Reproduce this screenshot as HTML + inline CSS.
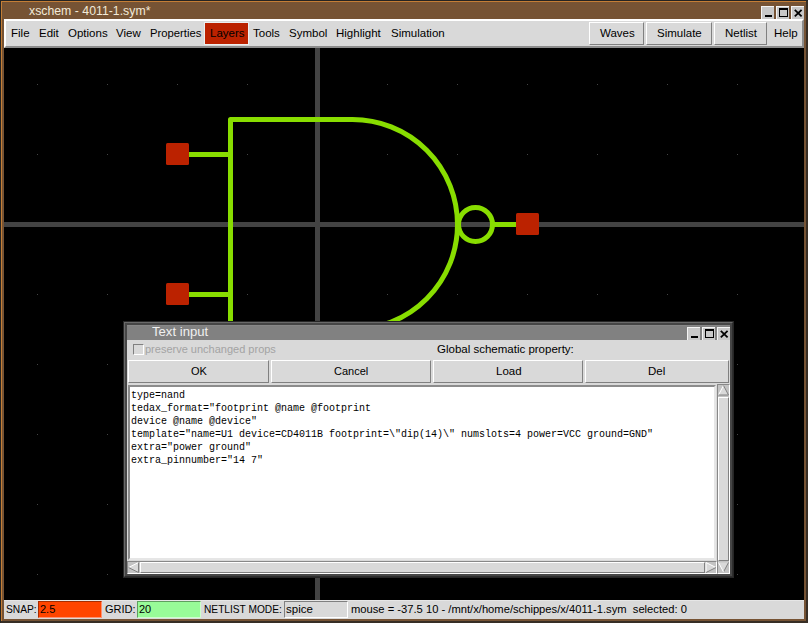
<!DOCTYPE html>
<html><head><meta charset="utf-8">
<style>
*{box-sizing:border-box;margin:0;padding:0}
html,body{width:808px;height:623px;overflow:hidden;background:#252423;font-family:"Liberation Sans",sans-serif}
.a{position:absolute}
.t{position:absolute;white-space:pre;line-height:1;transform-origin:0 0;color:#000}
.m{font-family:"Liberation Mono",monospace}
.btn{position:absolute;background:#d9d9d9;border-top:1px solid #fff;border-left:1px solid #fff;border-right:1px solid #808080;border-bottom:1px solid #808080}
.wb{position:absolute;width:13px;height:13px;background:#c8c8c8;border-top:1px solid #f4f4f4;border-left:1px solid #f4f4f4}
</style></head><body>
<!-- window frame -->
<div class="a" style="left:1px;top:1px;width:805px;height:621px;background:#c47e36"></div>
<div class="a" style="left:2px;top:2px;width:804px;height:619px;background:#3a3027"></div>
<div class="a" style="left:2px;top:2px;width:804px;height:619px;background:#765334;right:auto"></div>
<div class="a" style="left:806px;top:1px;width:2px;height:622px;background:#372e25"></div>
<div class="a" style="left:1px;top:621px;width:807px;height:2px;background:#372e25"></div>
<div class="t" style="left:29px;top:5px;font-size:12.3px;color:#f2ead8">xschem - 4011-1.sym*</div>
<!-- window buttons -->
<div class="wb" style="left:761px;top:6px"><div class="a" style="left:3px;top:8px;width:7px;height:2px;background:#000"></div></div>
<div class="wb" style="left:776px;top:6px"><div class="a" style="left:2px;top:1px;width:9px;height:9px;border:1.5px solid #000;border-top-width:2px"></div></div>
<div class="wb" style="left:791px;top:6px"><svg class="a" style="left:0;top:0" width="12" height="12" viewBox="0 0 12 12"><path d="M2.8 2.8L9.6 9.4M9.6 2.8L2.8 9.4" stroke="#000" stroke-width="1.8"/></svg></div>

<!-- menubar -->
<div class="a" style="left:4px;top:19px;width:800px;height:29px;background:#d9d9d9;border-top:2px solid #fff;border-left:2px solid #fff;border-right:2px solid #8c8c8c;border-bottom:2px solid #8c8c8c"></div>
<div class="a" style="left:204px;top:22px;width:45px;height:23px;background:#bb2200;border:1px solid #eceff0"></div>
<div class="t" style="left:11px;top:28px;font-size:11.5px">File</div>
<div class="t" style="left:39px;top:28px;font-size:11.5px">Edit</div>
<div class="t" style="left:68px;top:28px;font-size:11.5px">Options</div>
<div class="t" style="left:116px;top:28px;font-size:11.5px">View</div>
<div class="t" style="left:150px;top:28px;font-size:11.5px;transform:scaleX(0.98)">Properties</div>
<div class="t" style="left:210px;top:28px;font-size:11.5px">Layers</div>
<div class="t" style="left:253px;top:28px;font-size:11.5px">Tools</div>
<div class="t" style="left:289px;top:28px;font-size:11.5px">Symbol</div>
<div class="t" style="left:336px;top:28px;font-size:11.5px">Highlight</div>
<div class="t" style="left:391px;top:28px;font-size:11.5px">Simulation</div>
<div class="btn" style="left:589px;top:22px;width:55px;height:23px"></div>
<div class="btn" style="left:646px;top:22px;width:66px;height:23px"></div>
<div class="btn" style="left:714px;top:22px;width:53px;height:23px"></div>
<div class="t" style="left:600px;top:28px;font-size:11.5px">Waves</div>
<div class="t" style="left:657px;top:28px;font-size:11.5px">Simulate</div>
<div class="t" style="left:725px;top:28px;font-size:11.5px">Netlist</div>
<div class="t" style="left:774px;top:28px;font-size:11.5px">Help</div>

<!-- canvas -->
<svg class="a" style="left:4px;top:48px" width="800" height="552" viewBox="4 48 800 552">
<rect x="4" y="48" width="800" height="552" fill="#000"/>
<g fill="#444"><rect x="37" y="84" width="1" height="1"/><rect x="37" y="154" width="1" height="1"/><rect x="37" y="224" width="1" height="1"/><rect x="37" y="294" width="1" height="1"/><rect x="37" y="364" width="1" height="1"/><rect x="37" y="434" width="1" height="1"/><rect x="37" y="504" width="1" height="1"/><rect x="37" y="574" width="1" height="1"/><rect x="107" y="84" width="1" height="1"/><rect x="107" y="154" width="1" height="1"/><rect x="107" y="224" width="1" height="1"/><rect x="107" y="294" width="1" height="1"/><rect x="107" y="364" width="1" height="1"/><rect x="107" y="434" width="1" height="1"/><rect x="107" y="504" width="1" height="1"/><rect x="107" y="574" width="1" height="1"/><rect x="177" y="84" width="1" height="1"/><rect x="177" y="154" width="1" height="1"/><rect x="177" y="224" width="1" height="1"/><rect x="177" y="294" width="1" height="1"/><rect x="177" y="364" width="1" height="1"/><rect x="177" y="434" width="1" height="1"/><rect x="177" y="504" width="1" height="1"/><rect x="177" y="574" width="1" height="1"/><rect x="247" y="84" width="1" height="1"/><rect x="247" y="154" width="1" height="1"/><rect x="247" y="224" width="1" height="1"/><rect x="247" y="294" width="1" height="1"/><rect x="247" y="364" width="1" height="1"/><rect x="247" y="434" width="1" height="1"/><rect x="247" y="504" width="1" height="1"/><rect x="247" y="574" width="1" height="1"/><rect x="317" y="84" width="1" height="1"/><rect x="317" y="154" width="1" height="1"/><rect x="317" y="224" width="1" height="1"/><rect x="317" y="294" width="1" height="1"/><rect x="317" y="364" width="1" height="1"/><rect x="317" y="434" width="1" height="1"/><rect x="317" y="504" width="1" height="1"/><rect x="317" y="574" width="1" height="1"/><rect x="387" y="84" width="1" height="1"/><rect x="387" y="154" width="1" height="1"/><rect x="387" y="224" width="1" height="1"/><rect x="387" y="294" width="1" height="1"/><rect x="387" y="364" width="1" height="1"/><rect x="387" y="434" width="1" height="1"/><rect x="387" y="504" width="1" height="1"/><rect x="387" y="574" width="1" height="1"/><rect x="457" y="84" width="1" height="1"/><rect x="457" y="154" width="1" height="1"/><rect x="457" y="224" width="1" height="1"/><rect x="457" y="294" width="1" height="1"/><rect x="457" y="364" width="1" height="1"/><rect x="457" y="434" width="1" height="1"/><rect x="457" y="504" width="1" height="1"/><rect x="457" y="574" width="1" height="1"/><rect x="527" y="84" width="1" height="1"/><rect x="527" y="154" width="1" height="1"/><rect x="527" y="224" width="1" height="1"/><rect x="527" y="294" width="1" height="1"/><rect x="527" y="364" width="1" height="1"/><rect x="527" y="434" width="1" height="1"/><rect x="527" y="504" width="1" height="1"/><rect x="527" y="574" width="1" height="1"/><rect x="597" y="84" width="1" height="1"/><rect x="597" y="154" width="1" height="1"/><rect x="597" y="224" width="1" height="1"/><rect x="597" y="294" width="1" height="1"/><rect x="597" y="364" width="1" height="1"/><rect x="597" y="434" width="1" height="1"/><rect x="597" y="504" width="1" height="1"/><rect x="597" y="574" width="1" height="1"/><rect x="667" y="84" width="1" height="1"/><rect x="667" y="154" width="1" height="1"/><rect x="667" y="224" width="1" height="1"/><rect x="667" y="294" width="1" height="1"/><rect x="667" y="364" width="1" height="1"/><rect x="667" y="434" width="1" height="1"/><rect x="667" y="504" width="1" height="1"/><rect x="667" y="574" width="1" height="1"/><rect x="737" y="84" width="1" height="1"/><rect x="737" y="154" width="1" height="1"/><rect x="737" y="224" width="1" height="1"/><rect x="737" y="294" width="1" height="1"/><rect x="737" y="364" width="1" height="1"/><rect x="737" y="434" width="1" height="1"/><rect x="737" y="504" width="1" height="1"/><rect x="737" y="574" width="1" height="1"/><rect x="807" y="84" width="1" height="1"/><rect x="807" y="154" width="1" height="1"/><rect x="807" y="224" width="1" height="1"/><rect x="807" y="294" width="1" height="1"/><rect x="807" y="364" width="1" height="1"/><rect x="807" y="434" width="1" height="1"/><rect x="807" y="504" width="1" height="1"/><rect x="807" y="574" width="1" height="1"/></g>
<rect x="315" y="48" width="5" height="552" fill="#434343"/>
<rect x="4" y="222" width="800" height="5" fill="#434343"/>
<g stroke="#88dd00" stroke-width="5" fill="none" stroke-linejoin="round">
<path d="M230.5 340V119.5H352.5A105 105 0 0 1 352.5 329.5H230.5"/>
<path d="M177.5 154.5H230.5M177.5 294.5H230.5M494 224.5H527.5"/>
<circle cx="475.5" cy="224.5" r="17"/>
</g>
<g fill="#bb2200">
<rect x="166" y="143" width="23" height="22" rx="1.5"/>
<rect x="166" y="283" width="23" height="22" rx="1.5"/>
<rect x="516" y="213" width="23" height="22" rx="1.5"/>
</g>
</svg>

<!-- status bar -->
<div class="a" style="left:4px;top:600px;width:800px;height:19px;background:#d9d9d9;border-top:1px solid #e6e6e6"></div>
<div class="t" style="left:6px;top:604px;font-size:11px;transform:scaleX(0.93)">SNAP:</div>
<div class="a" style="left:38px;top:601px;width:64px;height:17px;background:#ff4500;border-top:1px solid #a82d00;border-left:1px solid #a82d00;border-bottom:1px solid #ff9070;border-right:1px solid #ff9070"></div>
<div class="t" style="left:40px;top:604px;font-size:11px">2.5</div>
<div class="t" style="left:105px;top:604px;font-size:11px">GRID:</div>
<div class="a" style="left:137px;top:601px;width:64px;height:17px;background:#98fb98;border-top:1px solid #5f9f5f;border-left:1px solid #5f9f5f;border-bottom:1px solid #ccffcc;border-right:1px solid #ccffcc"></div>
<div class="t" style="left:139px;top:604px;font-size:11px">20</div>
<div class="t" style="left:204px;top:604px;font-size:11px;transform:scaleX(0.925)">NETLIST MODE:</div>
<div class="a" style="left:284px;top:601px;width:64px;height:17px;background:#d9d9d9;border-top:1px solid #808080;border-left:1px solid #808080;border-bottom:1px solid #fff;border-right:1px solid #fff"></div>
<div class="t" style="left:286px;top:604px;font-size:11.5px">spice</div>
<div class="t" style="left:351px;top:604px;font-size:11.2px">mouse = -37.5 10 - /mnt/x/home/schippes/x/4011-1.sym  selected: 0</div>

<!-- dialog -->
<div class="a" style="left:123px;top:321px;width:611px;height:257px;background:#262626"></div>
<div class="a" style="left:124px;top:322px;width:609px;height:255px;background:#464646;border-top:1px solid #6a6a6a;border-left:1px solid #6a6a6a;border-right:1px solid #2e2e2e;border-bottom:1px solid #2e2e2e"></div>
<div class="a" style="left:127px;top:325px;width:603px;height:15px;background:#818181;border-top:1px solid #888"></div>
<div class="a" style="left:127px;top:340px;width:603px;height:234px;background:#d9d9d9"></div>
<div class="t" style="left:152px;top:326px;font-size:12.5px;transform:scaleX(1.05);color:#f0f0f0">Text input</div>
<div class="wb" style="left:687px;top:327px"><div class="a" style="left:3px;top:8px;width:7px;height:2px;background:#000"></div></div>
<div class="wb" style="left:702px;top:327px"><div class="a" style="left:2px;top:1px;width:9px;height:9px;border:1.5px solid #000;border-top-width:2px"></div></div>
<div class="wb" style="left:717px;top:327px"><svg class="a" style="left:0;top:0" width="12" height="12" viewBox="0 0 12 12"><path d="M2.8 2.8L9.6 9.4M9.6 2.8L2.8 9.4" stroke="#000" stroke-width="1.8"/></svg></div>

<div class="a" style="left:133px;top:344px;width:11px;height:11px;border-top:1px solid #808080;border-left:1px solid #808080;border-bottom:1px solid #fff;border-right:1px solid #fff"></div>
<div class="t" style="left:145px;top:344px;font-size:11px;color:#a3a3a3">preserve unchanged props</div>
<div class="t" style="left:437px;top:344px;font-size:11.5px">Global schematic property:</div>

<div class="btn" style="left:128px;top:360px;width:141px;height:23px"></div>
<div class="btn" style="left:271px;top:360px;width:160px;height:23px"></div>
<div class="btn" style="left:433px;top:360px;width:150px;height:23px"></div>
<div class="btn" style="left:585px;top:360px;width:144px;height:23px"></div>
<div class="t" style="left:191px;top:366px;font-size:11px">OK</div>
<div class="t" style="left:334px;top:366px;font-size:11px">Cancel</div>
<div class="t" style="left:496px;top:366px;font-size:11.5px">Load</div>
<div class="t" style="left:648px;top:366px;font-size:11.5px">Del</div>

<!-- text area -->
<div class="a" style="left:128px;top:385px;width:588px;height:175px;background:#fff;border-top:2px solid #8c8c8c;border-left:2px solid #8c8c8c;border-bottom:2px solid #e6e6e6;border-right:2px solid #e6e6e6"></div>
<div class="t m" style="left:131px;top:389px;font-size:10px;line-height:13px">type=nand
tedax_format="footprint @name @footprint
device @name @device"
template="name=U1 device=CD4011B footprint=\"dip(14)\" numslots=4 power=VCC ground=GND"
extra="power ground"
extra_pinnumber="14 7"</div>

<!-- vertical scrollbar -->
<div class="a" style="left:717px;top:384px;width:13px;height:190px;background:#c3c3c3;border-top:1px solid #888;border-left:1px solid #888;border-bottom:1px solid #fff;border-right:1px solid #fff"></div>
<div class="a" style="left:718px;top:397px;width:11px;height:164px;background:#d9d9d9;border-top:1px solid #fff;border-left:1px solid #fff;border-right:1px solid #808080;border-bottom:1px solid #808080"></div>
<svg class="a" style="left:718px;top:385px" width="11" height="11"><path d="M5.5 0.5L10.5 10H0.5Z" fill="#d9d9d9"/><path d="M0.5 10L5.5 0.5" stroke="#fff"/><path d="M5.5 0.5L10.5 10H0.5" stroke="#808080" fill="none"/></svg>
<svg class="a" style="left:718px;top:562px" width="11" height="11"><path d="M0.5 0.5H10.5L5.5 10Z" fill="#d9d9d9"/><path d="M10.5 0.5L5.5 10" stroke="#808080"/><path d="M0.5 0.5L5.5 10" stroke="#fff"/></svg>
<!-- horizontal scrollbar -->
<div class="a" style="left:127px;top:561px;width:590px;height:13px;background:#c3c3c3;border-top:1px solid #888;border-left:1px solid #888;border-bottom:1px solid #fff;border-right:1px solid #fff"></div>
<div class="a" style="left:140px;top:562px;width:565px;height:11px;background:#d9d9d9;border-top:1px solid #fff;border-left:1px solid #fff;border-right:1px solid #808080;border-bottom:1px solid #808080"></div>
<svg class="a" style="left:128px;top:562px" width="12" height="11"><path d="M0.5 5.5L10.5 0.5V10.5Z" fill="#d9d9d9"/><path d="M0.5 5.5L10.5 0.5" stroke="#fff"/><path d="M0.5 5.5L10.5 10.5V0.5" stroke="#808080" fill="none"/></svg>
<svg class="a" style="left:705px;top:562px" width="12" height="11"><path d="M11 5.5L1 0.5V10.5Z" fill="#d9d9d9"/><path d="M1 10.5V0.5L11 5.5" stroke="#fff" fill="none"/><path d="M11 5.5L1 10.5" stroke="#808080"/></svg>

</body></html>
